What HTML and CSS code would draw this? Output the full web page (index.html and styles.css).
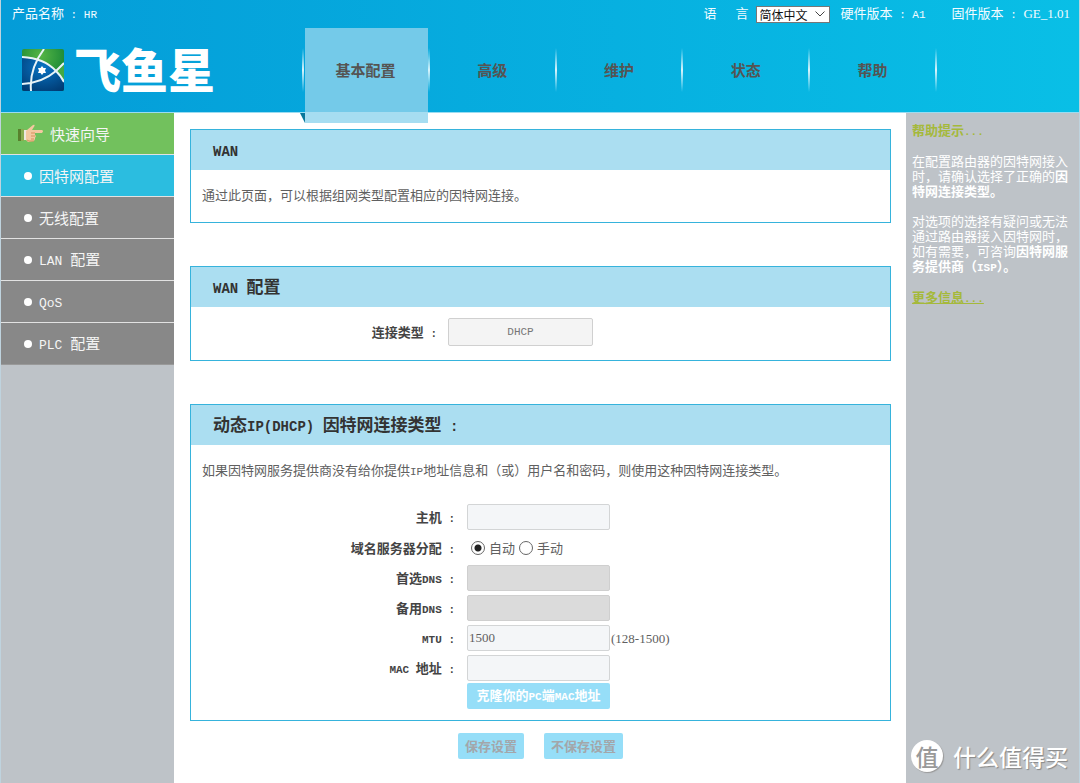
FILE: index.html
```
<!DOCTYPE html>
<html lang="zh-CN">
<head>
<meta charset="utf-8">
<title>飞鱼星 - 因特网配置</title>
<link rel="stylesheet" href="styles.css">
</head>
<body>
<div class="page">
  <header class="header">
    <div class="topbar">
      <div class="product">产品名称<span class="latin"> : HR</span></div>
      <div class="language">
        <label class="language-label" for="lang"><span>语</span><span>言</span></label>
        <span class="select-wrap">
          <select id="lang" class="lang-select"><option>简体中文</option></select>
          <svg class="chevron" viewBox="0 0 10 6" width="10" height="6" aria-hidden="true"><path d="M.5.5 5 5 9.5.5" fill="none" stroke="#444"/></svg>
        </span>
      </div>
      <div class="hardware">硬件版本<span class="latin"> : A1</span></div>
      <div class="firmware">固件版本<span class="latin"> : </span><span class="digits">GE_1.01</span></div>
    </div>
    <div class="masthead">
      <div class="brand">
        <svg class="brand-mark" viewBox="0 0 42 42" width="42" height="42" aria-hidden="true">
          <defs>
            <radialGradient id="green" cx=".45" cy=".15" r=".8"><stop offset="0" stop-color="#55b545"/><stop offset="1" stop-color="#087b32"/></radialGradient>
            <radialGradient id="blue" cx=".5" cy=".3" r=".8"><stop offset="0" stop-color="#0874c4"/><stop offset="1" stop-color="#003a72"/></radialGradient>
            <clipPath id="tile"><rect width="42" height="42" rx="2"/></clipPath>
          </defs>
          <g clip-path="url(#tile)">
            <rect width="42" height="42" fill="url(#green)"/>
            <path d="M0 8Q20 9 34 22Q38 27 42 33V42H0Z" fill="url(#blue)"/>
            <path d="M34 22 42 14V33Q39 27 34 22Z" fill="#42a944"/>
            <path d="M0 8Q22 9 34 22Q39 27 42 33M22 0Q7 20 9 42M0 35Q20 34 34 22L42 14" fill="none" stroke="#e8f3f7" stroke-width="2"/>
            <path d="M20 17l1.500 2h2.500l-1 2.500 1 2.500h-2.500l-1.500 2-1.500-2H16l1-2.500-1-2.500h2.500Z" fill="#fff"/>
          </g>
        </svg>
        <span class="brand-name">飞鱼星</span>
      </div>
      <nav class="tabs">
        <a class="tab tab-active" href="#basic">基本配置</a>
        <a class="tab" href="#advanced">高级</a>
        <a class="tab" href="#maintain">维护</a>
        <a class="tab" href="#status">状态</a>
        <a class="tab" href="#help">帮助</a>
      </nav>
    </div>
  </header>

  <div class="columns">
    <nav class="sidebar">
      <a class="side-item side-wizard" href="#wizard">
        <svg viewBox="0 0 26 20" width="26" height="20" aria-hidden="true">
          <path d="M0 5h5v12H0Z" fill="#58812d"/><path d="M3 5h3v12H3Z" fill="#8aae50"/><path d="M6 6h3v10H6Z" fill="#eee9df"/>
          <path d="M9 6 15 1q2-1 1.500 1L14 6h10q2 1 0 3h-7v2l1 1-1 2v1l-1 2-6 1-2-2V7Z" fill="#f4c8a0"/>
          <path d="M17 9h-4m4 3h-4m3 3h-3M9 16l2 1h5" fill="none" stroke="#d7925d"/>
        </svg>快速向导</a>
      <a class="side-item side-current" href="#wan"><span class="dot"></span>因特网配置</a>
      <a class="side-item" href="#wlan"><span class="dot"></span>无线配置</a>
      <a class="side-item" href="#lan"><span class="dot"></span><span><span class="latin">LAN </span>配置</span></a>
      <a class="side-item" href="#qos"><span class="dot"></span><span><span class="latin">QoS</span></span></a>
      <a class="side-item" href="#plc"><span class="dot"></span><span><span class="latin">PLC </span>配置</span></a>
    </nav>

    <main class="main">
      <section class="panel">
        <h2 class="panel-title"><span class="latin">WAN</span></h2>
        <p class="panel-text">通过此页面，可以根据组网类型配置相应的因特网连接。</p>
      </section>

      <section class="panel">
        <h2 class="panel-title"><span class="latin">WAN </span>配置</h2>
        <div class="type-row">
          <label class="label" for="type">连接类型<span class="latin"> :</span></label>
          <select id="type" class="type-select"><option>DHCP</option></select>
        </div>
      </section>

      <form class="settings">
        <section class="panel">
          <h2 class="panel-title">动态<span class="latin">IP(DHCP) </span>因特网连接类型<span class="latin"> :</span></h2>
          <p class="panel-text">如果因特网服务提供商没有给你提供<span class="latin">IP</span>地址信息和（或）用户名和密码，则使用这种因特网连接类型。</p>
          <div class="fields">
            <label class="label" for="host">主机<span class="latin"> :</span></label>
            <input class="input" id="host" type="text">
            <span class="label" id="dns-mode">域名服务器分配<span class="latin"> :</span></span>
            <div class="radios" role="radiogroup" aria-labelledby="dns-mode">
              <input class="radio" type="radio" name="dns" id="auto" checked><label for="auto">自动</label>
              <input class="radio" type="radio" name="dns" id="manual"><label for="manual">手动</label>
            </div>
            <label class="label" for="dns1">首选<span class="latin">DNS :</span></label>
            <input class="input" id="dns1" type="text" disabled>
            <label class="label" for="dns2">备用<span class="latin">DNS :</span></label>
            <input class="input" id="dns2" type="text" disabled>
            <label class="label" for="mtu"><span class="latin">MTU :</span></label>
            <div class="with-hint"><input class="input" id="mtu" type="text" value="1500"><span class="digits">(128-1500)</span></div>
            <label class="label label-top" for="mac"><span class="latin">MAC </span>地址<span class="latin"> :</span></label>
            <div class="mac-field">
              <input class="input" id="mac" type="text">
              <button class="button button-clone" type="button">克隆你的<span class="latin">PC</span>端<span class="latin">MAC</span>地址</button>
            </div>
          </div>
        </section>
        <div class="actions">
          <button class="button" type="submit" disabled>保存设置</button>
          <button class="button" type="reset" disabled>不保存设置</button>
        </div>
      </form>
    </main>

    <aside class="help">
      <h2 class="help-title">帮助提示<span class="latin">...</span></h2>
      <p>在配置路由器的因特网接入时，请确认选择了正确的<b>因特网连接类型。</b></p>
      <p>对选项的选择有疑问或无法通过路由器接入因特网时，如有需要，可咨询<b>因特网服务提供商（<span class="latin">ISP</span>）。</b></p>
      <a class="more" href="#more">更多信息<span class="latin">...</span></a>
    </aside>
  </div>

  <div class="watermark"><span class="watermark-badge">值</span><span>什么值得买</span></div>
</div>
</body>
</html>
```
FILE: styles.css
```
* { box-sizing: border-box; }
body {
  margin: 0;
  color: #606060;
  background: #fff;
  font: 13px/15px "Noto Sans CJK SC", sans-serif;
}
a { color: inherit; text-decoration: none; }
h2, p { margin: 0; }
button, input, select { font: inherit; color: inherit; margin: 0; }
.latin {
  font-family: "Liberation Mono", monospace;
  font-size: 11px;
  line-height: 1;
  white-space: pre;
}
.digits {
  font-family: "Liberation Serif", serif;
  font-size: 13px;
  line-height: 1;
}

.page {
  position: relative;
  display: flex;
  flex-direction: column;
  min-height: 100vh;
  border: solid #bfd3de;
  border-width: 0 1px;
}

/* header */
.header {
  background: linear-gradient(90deg, #049cd8, #09bfe6);
  border-bottom: 1px solid #9bdcf1;
}
.topbar {
  display: flex;
  align-items: center;
  height: 28px;
  padding: 0 9px 3px 11px;
  color: #f2fbff;
}
.product { flex: 1; }
.language { display: flex; align-items: center; gap: 7px; }
.language-label { display: flex; gap: 19px; }
.select-wrap { position: relative; padding-top: 3px; display: flex; }
.lang-select {
  appearance: none;
  width: 74px;
  height: 17px;
  padding: 0 0 0 3px;
  border: 1px solid #777;
  border-radius: 0;
  background: #fff;
  color: #111;
  font-size: 12px;
  line-height: 15px;
}
.chevron { position: absolute; right: 5px; top: 8px; pointer-events: none; }
.hardware { margin-left: 11px; }
.firmware { margin-left: 26px; }
.masthead { display: flex; height: 84px; }
.brand {
  display: flex;
  align-items: center;
  gap: 10px;
  flex: 0 0 301px;
  padding-left: 21px;
}
.brand-name {
  padding-bottom: 6px;
  color: #fff;
  font-size: 47px;
  font-weight: 900;
  line-height: 47px;
}
.tabs { display: flex; flex: 0 1 634px; height: 95px; }
.tab {
  position: relative;
  flex: 1;
  display: flex;
  align-items: center;
  justify-content: center;
  height: 84px;
  padding-bottom: 2px;
  color: #555453;
  font-size: 15px;
  font-weight: 700;
}
.tab::after, .tab-active::before {
  content: "";
  position: absolute;
  top: 20px;
  right: -1px;
  width: 2px;
  height: 44px;
  background: linear-gradient(transparent, #d9f4fc, transparent);
}
.tab-active::before { left: 0; right: auto; }
.tab-active {
  height: 95px;
  padding-bottom: 13px;
  background: linear-gradient(#74cae9 84px, #a6ddf1 84px) 3px 0 / calc(100% - 4px) 100% no-repeat;
}
.masthead::after {
  content: "";
  position: absolute;
  top: 113px;
  left: 299px;
  width: 5px;
  height: 10px;
  background: #08779b;
  clip-path: polygon(0 0, 100% 0, 100% 100%);
}

/* columns */
.columns { display: flex; flex: 1; }
.sidebar, .help { flex: 0 0 173px; background: #bec3c8; }
.side-item {
  display: flex;
  align-items: center;
  height: 42px;
  padding-left: 23px;
  background: #888;
  border-bottom: 1px solid #e2e2e2;
  color: #f5f5f5;
  font-size: 15px;
}
.side-item .latin { font-size: 13px; }
.side-item:last-child { border-bottom-color: #999; }
.side-wizard { gap: 6px; padding-left: 17px; background: #72c15d; }
.side-current { background: #2bbde0; }
.dot { width: 8px; height: 8px; margin-right: 7px; border-radius: 50%; background: #fff; }

.main { flex: 1; padding: 16px 15px 16px 16px; }
.panel { margin-bottom: 43px; border: 1px solid #36b3dc; }
.panel-title {
  height: 40px;
  padding-left: 22px;
  background: #abdef1;
  color: #333;
  font-size: 17px;
  line-height: 38px;
}
.panel-title .latin { font-size: 14px; }
.panel-text { padding: 17px 11px 20px; }
.label { color: #444; font-weight: 700; text-align: right; }
.type-row {
  display: grid;
  grid-template-columns: 246px 145px;
  column-gap: 11px;
  align-items: center;
  padding: 11px 0 14px;
}
.type-select {
  appearance: none;
  height: 28px;
  border: 1px solid #d0d0d0;
  border-radius: 2px;
  background: #f4f4f4;
  color: #777;
  font: 11px "Liberation Mono", monospace;
  text-align-last: center;
}
.settings .panel { margin-bottom: 12px; }
.fields {
  display: grid;
  grid-template-columns: 264px 1fr;
  gap: 4px 12px;
  align-items: center;
  padding: 6px 0 11px;
}
.input {
  width: 143px;
  height: 26px;
  padding: 0 1px;
  border: 1px solid #d3d5d6;
  border-radius: 2px;
  background: #f4f6f8;
  font: 13px "Liberation Serif", serif;
}
.input:disabled { background: #dbdbdb; border-color: #cfcfcf; }
.radios { display: flex; align-items: center; gap: 4px; height: 27px; padding-left: 4px; }
.radio {
  appearance: none;
  width: 14px;
  height: 14px;
  border: 1px solid #666;
  border-radius: 50%;
  background: #fff;
}
.radio:checked { background: radial-gradient(circle, #222 3px, #fff 4px); }
.with-hint { display: flex; align-items: center; gap: 1px; }
.mac-field { display: flex; flex-direction: column; gap: 2px; }
.label-top { align-self: start; line-height: 26px; }
.button {
  height: 26px;
  padding: 0 7px 2px;
  border: 0;
  border-radius: 2px;
  background: #96def8;
  font-weight: 700;
  color: #fff;
}
.button:disabled { color: #a3a6aa; }
.button-clone { width: 143px; }
.actions { display: flex; justify-content: center; gap: 20px; }

/* help */
.help {
  display: flex;
  flex-direction: column;
  align-items: start;
  gap: 15px;
  padding: 9px 10px 0 6px;
  color: #fff;
}
.help-title, .more { color: #a5b93b; font-size: 13px; font-weight: 700; line-height: 15px; }
.more { text-decoration: underline; }

.watermark {
  position: absolute;
  right: 11px;
  bottom: 11px;
  display: flex;
  align-items: center;
  gap: 10px;
  color: #fff;
  font-size: 23px;
  font-weight: 500;
  line-height: 32px;
  text-shadow: 1px 1px 1px #888;
}
.watermark-badge {
  width: 32px;
  border-radius: 50%;
  background: #fff;
  box-shadow: 1px 1px 1px #999;
  color: #999;
  text-align: center;
  text-shadow: none;
}
```
